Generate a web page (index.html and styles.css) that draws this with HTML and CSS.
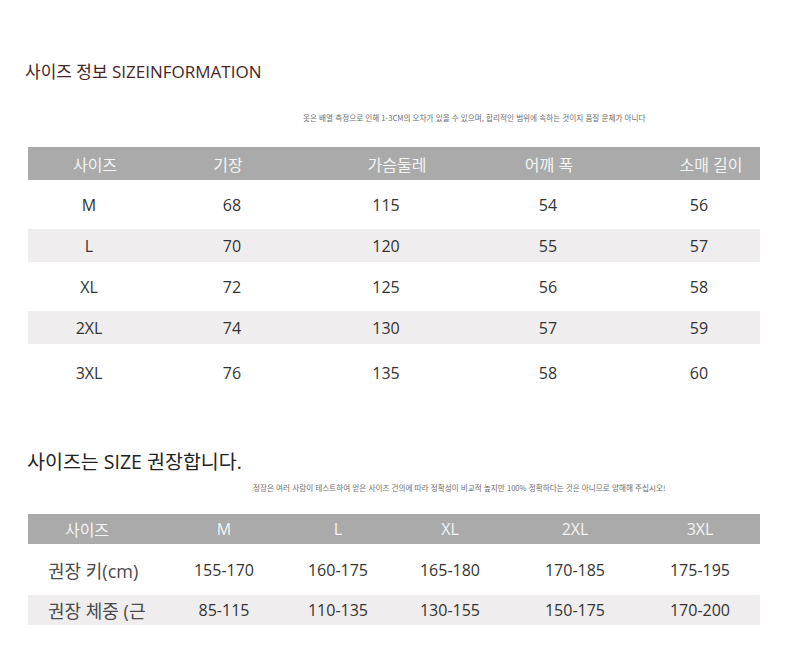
FILE: index.html
```html
<!DOCTYPE html>
<html lang="ko">
<head>
<meta charset="utf-8">
<title>사이즈 정보</title>
<link rel="stylesheet" href="styles.css">
</head>
<body>
<div class="page">
  <h1 class="title1">사이즈 정보 SIZEINFORMATION</h1>
  <p class="note note1">옷은 배열 측정으로 인해 1-3CM의 오차가 있을 수 있으며, 합리적인 범위에 속하는 것이지 품질 문제가 아니다</p>

  <div class="table t1">
    <div class="row head">
      <div class="c h1">사이즈</div>
      <div class="c h2">기장</div>
      <div class="c h3">가슴둘레</div>
      <div class="c h4">어깨 폭</div>
      <div class="c h5">소매 길이</div>
    </div>
    <div class="row tall"><div class="c">M</div><div class="c">68</div><div class="c">115</div><div class="c">54</div><div class="c">56</div></div>
    <div class="row band"><div class="c">L</div><div class="c">70</div><div class="c">120</div><div class="c">55</div><div class="c">57</div></div>
    <div class="row tall"><div class="c">XL</div><div class="c">72</div><div class="c">125</div><div class="c">56</div><div class="c">58</div></div>
    <div class="row band"><div class="c">2XL</div><div class="c">74</div><div class="c">130</div><div class="c">57</div><div class="c">59</div></div>
    <div class="row tall last"><div class="c">3XL</div><div class="c">76</div><div class="c">135</div><div class="c">58</div><div class="c">60</div></div>
  </div>

  <h2 class="title2">사이즈는 SIZE 권장합니다.</h2>
  <p class="note note2">정장은 여러 사람이 테스트하여 얻은 사이즈 건의에 따라 정확성이 비교적 높지만 100% 정확하다는 것은 아니므로 양해해 주십시오!</p>

  <div class="table t2">
    <div class="row head">
      <div class="c k1">사이즈</div>
      <div class="c">M</div>
      <div class="c">L</div>
      <div class="c">XL</div>
      <div class="c">2XL</div>
      <div class="c">3XL</div>
    </div>
    <div class="row tall">
      <div class="c label">권장 키(cm)</div>
      <div class="c">155-170</div><div class="c">160-175</div><div class="c">165-180</div><div class="c">170-185</div><div class="c">175-195</div>
    </div>
    <div class="row band">
      <div class="c label">권장 체중 (근</div>
      <div class="c">85-115</div><div class="c">110-135</div><div class="c">130-155</div><div class="c">150-175</div><div class="c">170-200</div>
    </div>
  </div>
</div>
</body>
</html>
```

FILE: styles.css
```css
html, body {
  margin: 0;
  padding: 0;
  background: #ffffff;
}
body {
  font-family: "Open Sans", "Noto Sans CJK KR", sans-serif;
  color: #333333;
}
.page {
  width: 790px;
  height: 672px;
  padding: 0 0 0 28px;
  box-sizing: border-box;
  overflow: hidden;
}
.title1 {
  margin: 0;
  padding-top: 60px;
  margin-left: -3px;
  font-family: "Open Sans", "Noto Sans CJK KR", sans-serif;
  font-weight: 400;
  font-size: 17px;
  line-height: 24px;
  color: #452628;
}
.note {
  margin: 0;
  font-family: "Noto Sans CJK KR", sans-serif;
  font-size: 7.6px;
  line-height: 10px;
  color: #6e6e6e;
  white-space: nowrap;
}
.note1 {
  margin-top: 29px;
  margin-left: 275px;
}
.table {
  width: 732px;
}
.t1 {
  margin-top: 24px;
}
.row {
  display: grid;
  align-items: center;
  font-size: 16px;
}
.c {
  text-align: center;
  white-space: nowrap;
}
.t1 .row {
  grid-template-columns: 122px 164px 144px 180px 122px;
}
.head {
  background: #aaaaaa;
  color: #f4f4f4;
  height: 33px;
}
.t1 .tall { height: 49px; }
.t1 .band { height: 33px; background: #efedee; }
.t1 .last { box-sizing: border-box; padding-top: 8px; }
.t1 .head .h1 { padding-left: 12px; }
.t1 .head .h2 { padding-right: 8px; }
.t1 .head .h3 { padding-left: 22px; }
.t1 .head .h4 { padding-left: 2px; }
.t1 .head .h5 { padding-left: 24px; }

.title2 {
  margin: 0;
  margin-top: 56px;
  margin-left: -1px;
  font-weight: 400;
  font-size: 19.5px;
  line-height: 26px;
  color: #222222;
}
.note2 {
  margin-top: 8px;
  margin-left: 225px;
}
.t2 {
  margin-top: 21px;
}
.t2 .row {
  grid-template-columns: 134px 124px 104px 120px 130px 120px;
}
.t2 .head { height: 30px; }
.t2 .head .k1 { padding-right: 16px; }
.t2 .tall { height: 51px; }
.t2 .band { height: 30px; background: #efedee; }
.t2 .label {
  text-align: left;
  padding-left: 20px;
  font-size: 18px;
  color: #4a4a4a;
}
```
